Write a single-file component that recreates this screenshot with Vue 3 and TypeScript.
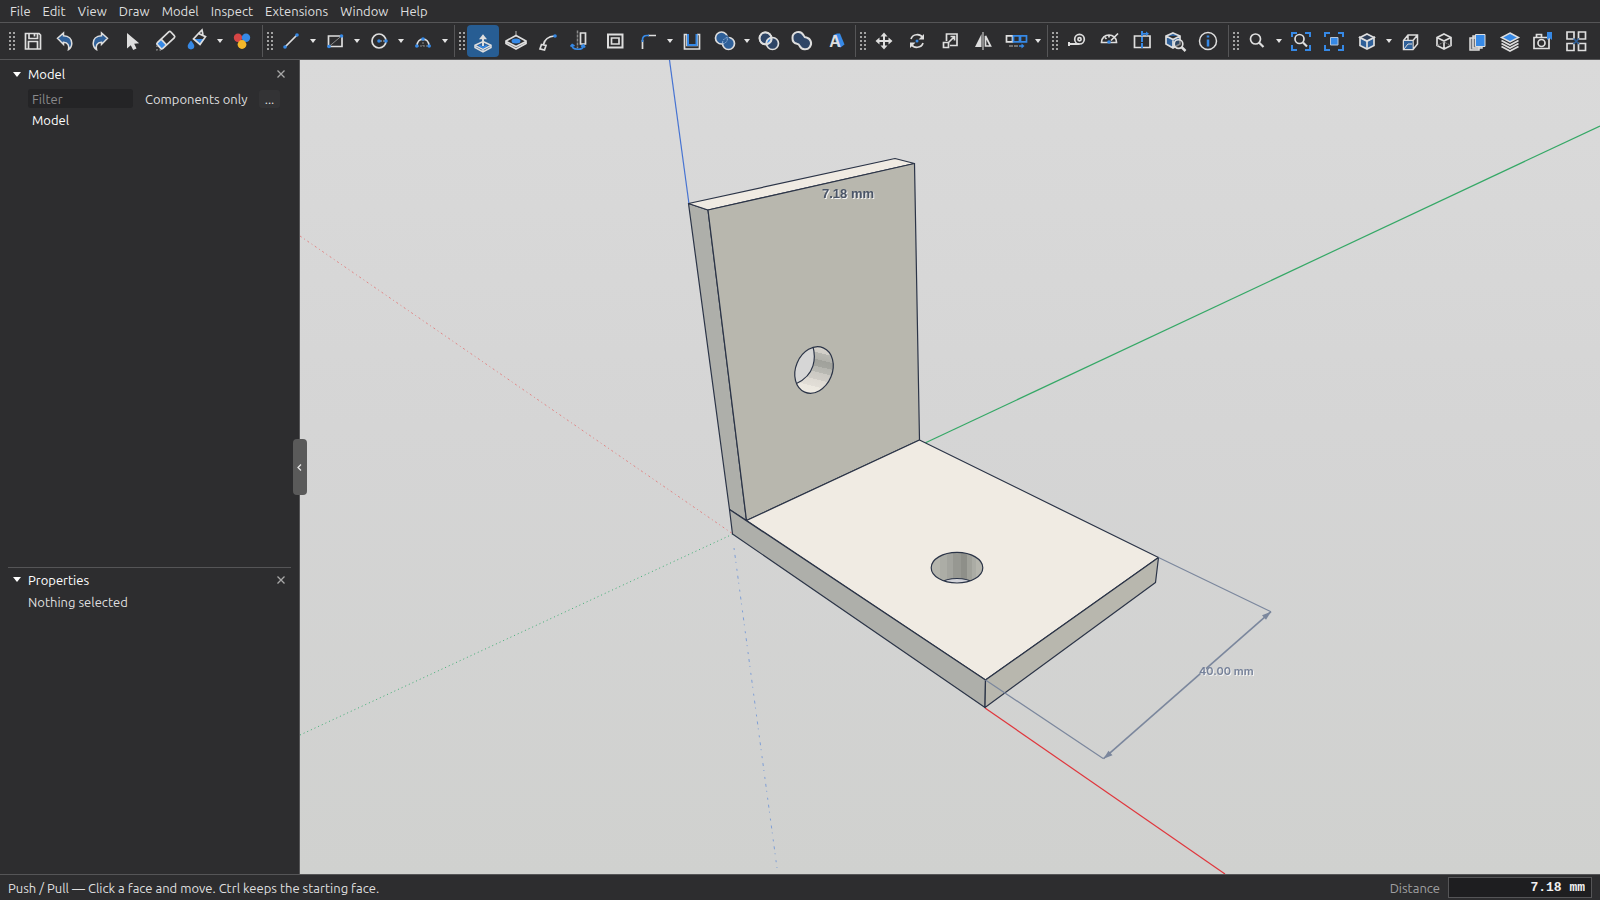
<script setup lang="ts">
import { ref } from 'vue'

interface Tool {
  name: string
  icon: string
  menu?: boolean
  active?: boolean
}

const W = '#dedede'
const B = '#3689e6'
const D = '#2f6099'
const G = '#8a8a8a'

const menus: string[] = ['File', 'Edit', 'View', 'Draw', 'Model', 'Inspect', 'Extensions', 'Window', 'Help']

const dot = (x: number, y: number): string => `<circle cx="${x}" cy="${y}" r="1.8" fill="${B}" stroke="none"/>`
const brackets = `<path stroke="${B}" stroke-width="2" d="M7 12V8h5M20 8h5v4M25 20v5h-5M12 25H7v-5"/>`
const magnifier = `<circle cx="14.500" cy="14" r="4.500"/><path stroke-width="2.200" d="M18 17.500l4 4"/>`

const groups: Tool[][] = [
  [
    { name: 'Save', icon: `<path d="M8.500 8.500h13.500l1.500 1.500v14h-15zM12 8.500v5h8.500v-5M17.500 9v2.500M11.500 24v-7.500h9v7.500"/>` },
    { name: 'Undo', icon: `<path fill="${D}" stroke-width="1.500" d="M7.500 13.300 13.500 8v2.800c5.500.2 8.300 3.400 8.300 7.400 0 2.800-1.200 5-3.300 6.300.8-3.500-.2-7-5-7.200v2.200z"/>` },
    { name: 'Redo', icon: `<path fill="${D}" stroke-width="1.500" d="M24.500 13.300 18.500 8v2.800c-5.500.2-8.300 3.400-8.300 7.400 0 2.800 1.200 5 3.300 6.300-.8-3.500.2-7 5-7.200v2.200z"/>` },
    { name: 'Select', icon: `<path fill="${W}" stroke="none" d="M11 8v15.500l3.800-3.300 2.400 4.800 3.300-1.600-2.300-4.600 5-.5z"/>` },
    { name: 'Eraser', icon: `<g transform="rotate(-43 17 15)"><rect x="7" y="11" width="6.500" height="8" fill="${B}" stroke="none"/><rect x="7.500" y="11" width="18.500" height="8" rx="1.500"/><path d="M14 11v8"/></g><path stroke="${G}" stroke-width="1.500" stroke-dasharray="1.500 2" d="M8 20.500v4.500h6"/>` },
    { name: 'Paint', menu: true, icon: `<path fill="${B}" stroke="none" d="M12 14h10.500l-5 6z"/><path d="M16.500 8.500l7 3.200-5.500 7.800-6.500-5.500zM16.500 8.500l3.500-3.500 1 5"/><path fill="${B}" stroke="none" d="M9 15.500c2 2.600 3.300 4 3.300 5.600a3.300 3.300 0 0 1-6.600 0c0-1.600 1.300-3 3.300-5.600z"/>` },
    { name: 'Materials', icon: `<g stroke="none"><circle cx="12" cy="12.800" r="4.200" fill="#d64545"/><circle cx="20" cy="12.800" r="4.200" fill="${B}"/><circle cx="16" cy="19.500" r="4.400" fill="#f3b72b"/></g>` },
  ],
  [
    { name: 'Line', menu: true, icon: `<path d="M10 22 22 10"/>${dot(10, 22)}${dot(22, 10)}` },
    { name: 'Rectangle', menu: true, icon: `<path stroke="${G}" stroke-width="1" d="M10 21.500 23 10.500"/><path d="M9.500 11h13.500v10.500H9.500z"/>${dot(10, 21.5)}${dot(22.5, 11)}` },
    { name: 'Circle', menu: true, icon: `<circle cx="16" cy="16" r="7"/><path stroke="${G}" stroke-dasharray="2 1" d="M17 16h5"/>${dot(16, 16)}${dot(23, 16)}` },
    { name: 'Arc', menu: true, icon: `<path stroke="${G}" stroke-width="1" stroke-dasharray="2 1" d="M10 21h12M16 14v7"/><path d="M10 21c0-9.300 12-9.300 12 0"/>${dot(9.8, 21)}${dot(22.2, 21)}${dot(16, 14)}` },
  ],
  [
    { name: 'Push / Pull', active: true, icon: `<path fill="${D}" stroke-width="1.500" d="M16 16.500l8 3.800v2.200l-8 4.300-8-4.300v-2.200z"/><path stroke-width="1.500" d="M8 20.300l8 4 8-4M16 24.500v2"/><path stroke="${B}" d="M12 20.500l4 2 4-2"/><path stroke-width="2" d="M16 21v-7"/><path fill="${W}" stroke="none" d="M16 9.300l4 5h-8z"/>` },
    { name: 'Offset', icon: `<path stroke="${G}" stroke-width="1.500" d="M16 6v6"/><path d="M16 10.500 26 16v2.500l-10 5.500-10-5.500V16zM6 16.500l10 5 10-5"/><ellipse cx="16" cy="16" rx="4.500" ry="2.500" fill="${B}" stroke="none"/>` },
    { name: 'Follow Me', icon: `<path d="M10.500 19.500c1-4.500 4-8 11-8.500M8.500 19.500l4.500 1-1.500 4.500-4.500-1.200z"/>${dot(22, 11)}` },
    { name: 'Revolve', icon: `<path stroke="${G}" stroke-width="1.500" stroke-dasharray="3 1" d="M11.500 5.500v18"/><path d="M14.500 8h5v11h-5z"/><path stroke="${B}" d="M6 20c0 5.500 10.500 5.500 11.500 1M4.500 21.500 6.200 19.500 8.500 21M15 21.500l2.500-1.500 1.500 2.500"/>` },
    { name: 'Frame', icon: `<path stroke-width="2" d="M9 9.500h14.500v13H9z"/><path d="M12.500 13h7.500v6h-7.500z"/>` },
    { name: 'Fillet', menu: true, icon: `<path d="M10.500 24v-9M16 10.500h8"/><path stroke="${B}" stroke-width="1.700" d="M10.500 17v-2c0-3 1.500-4.500 4.500-4.500h2"/>` },
    { name: 'Shell', icon: `<path d="M11 9.500H8.500V24h15V9.500H21M11 9.500v11h10v-11"/><path stroke="${B}" stroke-width="2" d="M12 9v11h8.500V9"/>` },
    { name: 'Union', menu: true, icon: `<g fill="${D}"><circle cx="12.500" cy="13" r="6"/><circle cx="19.500" cy="18.500" r="6"/><path stroke="none" d="M12 18l0-4 6-4 3 4-2 5z"/></g><path stroke="#8fb0d8" stroke-width="1" stroke-dasharray="2 1" d="M18.500 13.500c0 3-2 5-5 5.500M13.500 18c0-3 2-5 5-5.500"/>` },
    { name: 'Intersect', icon: `<g fill="#2e4566"><circle cx="12.500" cy="13.300" r="6"/><circle cx="19.500" cy="18.500" r="6"/></g><path fill="${B}" d="M18.500 12.600c.8 3-1 6-5 6.600-.5-3 1-6 5-6.600z"/><circle cx="12.500" cy="13.300" r="6"/>` },
    { name: 'Merge', icon: `<path fill="#2e4566" stroke-width="2" d="M6.500 13a5.800 5.800 0 0 1 11-2.800c.6 1.800 1.500 2.200 3 2.300a6 6 0 1 1-6.800 8.500c-.5-1.500-1.200-2-2.700-2.200A5.800 5.800 0 0 1 6.500 13z"/>` },
    { name: '3D Text', icon: `<path fill="${B}" stroke="none" d="M14.500 10 18 8.500h3l4.500 11-4 3-3-1z"/><text x="16" y="22" fill="${W}" stroke="none" font-family="Liberation Sans, sans-serif" font-weight="700" font-size="16" text-anchor="middle">A</text>` },
  ],
  [
    { name: 'Move', icon: `<path stroke-width="2" d="M10 16h12M16 10v12"/><path fill="${W}" stroke="none" d="M16 7.500l3.500 4h-7zM16 24.500l3.500-4h-7zM7.500 16l4-3.500v7zM24.500 16l-4-3.500v7z"/>` },
    { name: 'Rotate', icon: `<path d="M10 14c1.500-5 9-6 12-1M22 18c-1.500 5-9 6-12 1"/><path fill="${W}" stroke="none" d="M23 9v5.500h-5.500zM9 23v-5.500h5.500z"/><circle cx="16" cy="16" r="1.500" fill="${B}" stroke="none"/>` },
    { name: 'Scale', icon: `<path d="M12.500 16V9H23v11.500h-7M9.500 17.500h5v5h-5zM14.500 17.500l6-6M16.500 11.500h4v4"/>` },
    { name: 'Flip', icon: `<path stroke="${G}" stroke-width="2" d="M16 7v18"/><path fill="${W}" stroke="none" d="M14.500 9v13H8z"/><path d="M18.500 11v10h5z"/>` },
    { name: 'Array', menu: true, icon: `<path d="M6.500 10.800h6v6h-6z"/><path stroke="${B}" d="M13.500 10.800h6v6h-6zM20.500 10.800h6v6h-6zM19 21h4"/><path stroke="${G}" stroke-dasharray="4 1" d="M9 21h10"/><path fill="${B}" stroke="none" d="M21.500 18.500l3 2.500-3 2.500z"/>` },
  ],
  [
    { name: 'Tape Measure', icon: `<circle cx="19.500" cy="14.200" r="4.800"/><circle cx="19.500" cy="14.200" r="1.600"/><path stroke-width="2" d="M19.500 19H9M9 17v4"/>` },
    { name: 'Protractor', icon: `<path d="M8.500 17.500c0-10 15-10 15 0zM12 12.500l1.500 1.500M16 10.500v2M18 15.500l7-7"/>${dot(16, 17)}` },
    { name: 'Section', icon: `<path d="M8.500 11h15.500v11.500H8.500z"/><path stroke="${B}" stroke-width="2" stroke-dasharray="5 1" d="M16 6v18"/><path stroke="${B}" d="M17 8.800h4"/><path fill="${B}" stroke="none" d="M20 6.500l3 2.300-3 2.300z"/>` },
    { name: 'Inspect Solid', icon: `<path fill="${D}" d="M14 8l7 3v8l-7 4-7-4v-8zM7 11l7 3.500 7-3.500M14 14.500V23"/><circle cx="19.500" cy="19" r="4.300" fill="#2d2d2f" fill-opacity=".5"/><path stroke-width="2.500" d="M22.500 22l4 4"/>` },
    { name: 'Info', icon: `<circle cx="16" cy="16" r="8.500" stroke-width="1.500"/><path stroke="${B}" stroke-width="2.500" d="M16 14.500v7M16 10.500v2"/>` },
  ],
  [
    { name: 'Zoom', menu: true, icon: `<circle cx="14.500" cy="14" r="5"/><path stroke-width="2.200" d="M18 17.500l4.500 4.500"/>` },
    { name: 'Zoom Extents', icon: brackets + magnifier },
    { name: 'Zoom Selection', icon: `${brackets}<path stroke="#b4c4d8" stroke-width="1" fill="${B}" d="M12.500 12.500h7.500v7.500h-7.500z"/>` },
    { name: 'Views', menu: true, icon: `<path fill="${D}" d="M9 12.500l7 3.500 7-3.500v8L16 24l-7-3.500z"/><path fill="#2d3f5a" d="M16 9l7 3.500-7 3.500-7-3.500z"/><path d="M16 16v8"/>` },
    { name: 'Projection', icon: `<path stroke-width="1.500" d="M8.500 15.500 13 10h9.500v9L18 24.500H8.500zM8.500 15.500H18v9M18 15.500l4.500-5.500M13 10v6"/><path fill="${D}" stroke="none" d="M9 16h8.500v8H9z"/><path stroke-width="1" d="M9 24l4-5h4"/>` },
    { name: 'Wireframe', icon: `<path d="M16 9l7 3.500v8L16 24l-7-3.500v-8zM9 12.500l7 3.500 7-3.500M16 16v8"/><path stroke="${G}" stroke-width="1" stroke-dasharray="2 1" d="M9 20.500l7-3.500 7 3.500"/>` },
    { name: 'Clones', icon: `<path fill="#70747c" stroke-width="1.500" d="M9 13h9v12H9zM12 11h9v12h-9z"/><path fill="${B}" stroke-width="1" d="M14.500 9.500h9.500v12h-9.500z"/>` },
    { name: 'Layers', icon: `<path fill="${B}" stroke-width="1.500" d="M16 8l8.500 4.500L16 17l-8.500-4.500z"/><path d="M7.500 15.500 16 20l8.500-4.500M7.500 18.500 16 23l8.500-4.500M7.500 21.500 16 26l8.500-4.500"/>` },
    { name: 'Snapshot', icon: `<path d="M7 12.500h15v11H7zM9.500 12V9.500h5V12"/><circle cx="14.500" cy="18" r="3.500"/><path fill="${B}" stroke="none" d="M20 7h5v8l-2.500-2-2.500 2z"/>` },
    { name: 'Viewports', icon: `<path d="M7 7h7v7H7zM18.500 7h7v7h-7zM7 18.500h7v7H7zM18.500 18.500h7v7h-7z"/><path stroke="${D}" d="M13.500 13.500l5.500 5.500M19 13.500 13.500 19"/>` },
  ],
]

const filter = ref('')
const distance = ref('7.18 mm')
const sidebarOpen = ref(true)
</script>

<template>
  <div class="app">
    <nav class="menubar">
      <button v-for="m in menus" :key="m" class="menu">{{ m }}</button>
    </nav>

    <div class="toolbar" role="toolbar">
      <div v-for="(group, gi) in groups" :key="gi" class="group">
        <svg class="grip" width="6" height="18" viewBox="0 0 6 18" aria-hidden="true">
          <path d="M1 0v18M5 0v18" stroke="#a2a2a2" stroke-width="2" stroke-dasharray="2 2" />
        </svg>
        <div v-for="tool in group" :key="tool.name" class="tool-wrap">
          <button class="tool" :class="{ active: tool.active }" :aria-label="tool.name">
            <svg width="32" height="32" viewBox="0 0 32 32" fill="none" :stroke="W" stroke-width="1.7" v-html="tool.icon"></svg>
          </button>
          <button v-if="tool.menu" class="drop" :aria-label="tool.name + ' options'">
            <svg width="6" height="4" viewBox="0 0 6 4"><path d="M0 0h6L3 4z" fill="#e4e4e4" /></svg>
          </button>
        </div>
      </div>
    </div>

    <main class="body">
      <aside v-if="sidebarOpen" class="sidebar">
        <section class="panel tree">
          <header class="head">
            <svg class="tri" width="8" height="5" viewBox="0 0 8 5"><path d="M0 0h8L4 5z" fill="#fff" /></svg>
            <h2>Model</h2>
            <button class="close" aria-label="Close Model">
              <svg width="8" height="8" viewBox="0 0 8 8"><path d="M.5.5l7 7M7.500.5l-7 7" stroke="#a8a8a8" stroke-width="1.300" /></svg>
            </button>
          </header>
          <div class="filters">
            <input v-model="filter" class="filter" type="text" placeholder="Filter" aria-label="Filter" />
            <button class="only">Components only</button>
            <button class="more">...</button>
          </div>
          <div class="node">Model</div>
        </section>
        <section class="panel props">
          <header class="head">
            <svg class="tri" width="8" height="5" viewBox="0 0 8 5"><path d="M0 0h8L4 5z" fill="#fff" /></svg>
            <h2>Properties</h2>
            <button class="close" aria-label="Close Properties">
              <svg width="8" height="8" viewBox="0 0 8 8"><path d="M.5.5l7 7M7.500.5l-7 7" stroke="#a8a8a8" stroke-width="1.300" /></svg>
            </button>
          </header>
          <p class="empty">Nothing selected</p>
        </section>
      </aside>

      <div class="viewport">
        <button class="handle" aria-label="Toggle sidebar" @click="sidebarOpen = !sidebarOpen">
          <svg width="6" height="7" viewBox="0 0 6 7"><path d="M4 .5l-3 3 3 3" fill="none" stroke="#e4e4e4" stroke-width="1.300" /></svg>
        </button>
        <svg class="scene" viewBox="300 60 1300 814" preserveAspectRatio="xMidYMid slice">
          <defs>
            <clipPath id="wallHole"><ellipse cx="814" cy="370" rx="18.300" ry="24" transform="rotate(22.700 814 370)" /></clipPath>
            <clipPath id="baseHole"><ellipse cx="957" cy="567.700" rx="25.800" ry="15.300" /></clipPath>
            <linearGradient id="bore" x1="0" y1="0" x2="0" y2="1">
              <stop offset="0" stop-color="#d9d6cf" /><stop offset=".18" stop-color="#d0cdc7" />
              <stop offset=".18" stop-color="#b8b8b2" /><stop offset=".3" stop-color="#b0b0aa" />
              <stop offset=".3" stop-color="#a0a19b" /><stop offset=".42" stop-color="#a4a59f" />
              <stop offset=".42" stop-color="#b5b5af" /><stop offset=".52" stop-color="#b9b9b3" />
              <stop offset=".52" stop-color="#cbc9c3" /><stop offset=".65" stop-color="#d0cdc7" />
              <stop offset=".65" stop-color="#dedad3" /><stop offset=".78" stop-color="#e2ded7" />
              <stop offset=".78" stop-color="#ece8e0" /><stop offset="1" stop-color="#efebe3" />
            </linearGradient>
          </defs>
          <g fill="none">
            <path d="M300 236 733 534" stroke="#e46a6a" stroke-width="1" stroke-dasharray="2 3 1 3" opacity=".75" />
            <path d="M300 735 733 534" stroke="#3fae74" stroke-width="1" stroke-dasharray="1 3" />
            <path d="M734 548 777 868" stroke="#7f9fd6" stroke-width="1" stroke-dasharray="2 5 3 4 1 6" />
            <path d="M669.500 60 689 204" stroke="#4673d2" stroke-width="1.200" />
            <path d="M925 443 1600 126" stroke="#35a866" stroke-width="1.200" />
            <path d="M985 708 1225 874" stroke="#e0363c" stroke-width="1.200" />
          </g>
          <g stroke="#2b3447" stroke-width="1.200" stroke-linejoin="round">
            <path d="M688.500 203.500 708 210 746.500 520.500 729.500 509.500z" fill="#aeafaa" />
            <path d="M688.500 203.500 895 158.500 914.500 163.500 708 210z" fill="#f0ebe3" />
            <path d="M708 210 914.500 163.500 919.500 440 746.500 520.500z" fill="#b8b7ae" />
            <path d="M919.500 440 1158.500 557.500 985.500 680 746.500 520.500z" fill="#f0ebe3" />
            <path d="M729.500 509.500 985.500 680 985 707.500 732.500 534z" fill="#aeafaa" />
            <path d="M985.500 680 1158.500 557.500 1155.500 582.500 985 707.500z" fill="#b8b7ae" />
          </g>
          <g clip-path="url(#wallHole)">
            <path d="M785 342h58v56h-58z" fill="url(#bore)" transform="rotate(14 814 370)" />
            <path d="M790 345h22.500c4 13 2.500 30-16 38.500l-6 3z" fill="#d6d6d6" />
            <path d="M812.500 345c4 13 2.500 30-16 38.500" fill="none" stroke="#2b3447" stroke-width="1.200" />
          </g>
          <g clip-path="url(#baseHole)">
            <path d="M930 550h54v36h-54z" fill="#b5b5ad" />
            <path d="M940 550h13v36h-13z" fill="#acada6" />
            <path d="M947 550h6v36h-6z" fill="#a3a49e" />
            <path d="M953 550h8v36h-8z" fill="#979892" />
            <path d="M961 550h6v36h-6z" fill="#8e8f89" />
            <path d="M967 550h5v36h-5z" fill="#a0a19a" />
            <path d="M972 550h4v36h-4z" fill="#abaca5" />
            <path d="M940 583c8-6 26-6 34 0v5h-34z" fill="#d3d4da" stroke="#2b3447" stroke-width="1.200" />
          </g>
          <g fill="none" stroke="#2b3447" stroke-width="1.200">
            <ellipse cx="814" cy="370" rx="18.300" ry="24" transform="rotate(22.700 814 370)" />
            <ellipse cx="957" cy="567.700" rx="25.800" ry="15.300" />
          </g>
          <g fill="none" stroke="#7b879d" stroke-width="1.200">
            <path d="M1158.500 557.500 1271 611.700M985.500 680 1103.500 758.700" />
            <path d="M1271 611.700 1103.500 758.700" stroke-width="1.600" />
            <path d="M1271 611.700l-5 8-4-4.500zM1103.500 758.700l5-8 4 4.500z" fill="#7b879d" stroke="none" />
          </g>
          <text class="dim" x="1199" y="675">40.00 mm</text>
          <text class="live" x="822" y="198">7.18 mm</text>
        </svg>
      </div>
    </main>

    <footer class="status">
      <span class="hint">Push / Pull — Click a face and move. Ctrl keeps the starting face.</span>
      <label class="distance-label" for="distance">Distance</label>
      <input id="distance" v-model="distance" class="distance" type="text" />
    </footer>
  </div>
</template>

<style>
body {
  background: #2d2d2f;
}
</style>

<style scoped>
.app {
  display: flex;
  flex-direction: column;
  height: 100vh;
  overflow: hidden;
  background: #2d2d2f;
  color: #dfdfdf;
  font-family: Ubuntu, 'Noto Sans', sans-serif;
  font-size: 13px;
  line-height: 16px;
}
button,
input {
  margin: 0;
  padding: 0;
  border: 0;
  background: none;
  color: inherit;
  font: inherit;
}
svg {
  display: block;
}
.menubar {
  display: flex;
  align-items: center;
  height: 22px;
  padding-left: 4px;
  border-bottom: 1px solid #555557;
}
.menu {
  padding: 0 6px;
}
.toolbar {
  display: flex;
  padding: 2px 0 2px 4px;
  border-bottom: 1px solid #555557;
}
.group {
  display: flex;
  flex: none;
  align-items: center;
  gap: 1px;
  padding: 0 4px;
  border-left: 1px solid #555557;
}
.group:first-child {
  border-color: transparent;
}
.grip {
  margin-right: 1px;
}
.tool-wrap {
  display: flex;
}
.tool {
  width: 32px;
  height: 32px;
  border-radius: 4px;
}
.tool.active {
  background: #275d93;
}
.drop {
  display: flex;
  align-items: center;
  justify-content: center;
  width: 11px;
}
.body {
  display: flex;
  flex: 1;
  min-height: 0;
}
.sidebar {
  box-sizing: border-box;
  display: flex;
  flex-direction: column;
  width: 300px;
  padding: 4px 8px;
  border-right: 1px solid #555557;
}
.tree {
  flex: 504 1 0;
}
.props {
  flex: 301 1 0;
  border-top: 1px solid #555557;
  padding-top: 2px;
}
.head {
  display: flex;
  align-items: center;
  height: 20px;
  padding: 0 6px 0 5px;
}
.head h2 {
  flex: 1;
  margin: 0 0 0 7px;
  color: #fff;
  font-size: 13px;
  font-weight: 400;
}
.filters {
  display: flex;
  align-items: center;
  gap: 12px;
  margin: 5px 0 0 20px;
}
.filter {
  box-sizing: border-box;
  width: 105px;
  height: 19px;
  padding: 0 4px;
  border-radius: 3px;
  background: #242426;
}
.filter::placeholder {
  color: #8a8a8c;
}
.only {
  white-space: nowrap;
  width: 102px;
  text-align: left;
}
.more {
  width: 21px;
  height: 18px;
  border-radius: 3px;
  background: #333335;
}
.node {
  margin: 4px 0 0 24px;
  color: #fff;
}
.empty {
  margin: 4px 0 0 20px;
}
.viewport {
  position: relative;
  flex: 1;
  min-width: 0;
  background: linear-gradient(#dadada, #d5d5d5 45%, #d0d1cf);
}
.scene {
  width: 100%;
  height: 100%;
}
.handle {
  position: absolute;
  top: 50%;
  left: -7px;
  display: flex;
  align-items: center;
  justify-content: center;
  width: 14px;
  height: 56px;
  margin-top: -28px;
  border-radius: 4px;
  background: #5a5a5a;
}
.dim {
  font: 600 11px Inter, sans-serif;
  fill: #76829a;
  filter: drop-shadow(1px 1px 0 #f4f4f4);
}
.live {
  font: 700 13px 'Liberation Sans', sans-serif;
  fill: #4a5568;
  filter: drop-shadow(1px 1px 0 #f4f4f4);
}
.status {
  display: flex;
  align-items: center;
  height: 25px;
  padding: 0 8px;
  border-top: 1px solid #555557;
}
.hint {
  flex: 1;
}
.distance-label {
  margin-right: 8px;
  color: #a0a0a2;
}
.distance {
  box-sizing: border-box;
  width: 144px;
  height: 21px;
  padding: 0 6px;
  border: 1px solid #555557;
  background: #1e1e20;
  color: #f0f0f0;
  font: 700 13px 'Liberation Mono', monospace;
  text-align: right;
}
</style>
